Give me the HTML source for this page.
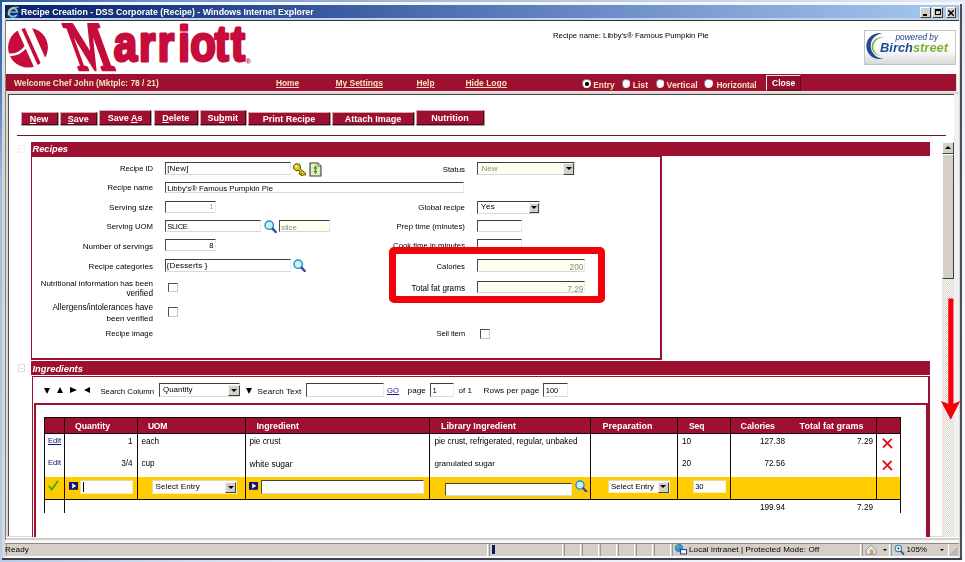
<!DOCTYPE html>
<html lang="en"><head><meta charset="utf-8"><title>Recipe Creation - DSS Corporate (Recipe) - Windows Internet Explorer</title>
<style>
html,body{margin:0;padding:0;}
body{width:965px;height:562px;overflow:hidden;position:relative;font-family:"Liberation Sans",sans-serif;
background:#f4f6fb;}
.t{position:absolute;white-space:nowrap;}
.L{position:absolute;left:0;top:0;width:965px;height:562px;will-change:transform;}
</style></head><body>
<div style="position:absolute;left:0px;top:0px;width:965px;height:3px;background:linear-gradient(to right,#2a5aa0 0,#6f93cc 160px,#aabde0 440px,#e4e9f5 100%);"></div>
<div style="position:absolute;left:0px;top:0px;width:3px;height:562px;background:linear-gradient(to bottom,#2a5aa0 0,#4a7ab8 85px,#a8b8dc 180px,#b8cce8 100%);"></div>
<div style="position:absolute;left:0px;top:559px;width:965px;height:3px;background:linear-gradient(to right,#b8cce8 0,#dfe6f4 300px,#f8f9fd 100%);"></div>
<div style="position:absolute;left:961px;top:0px;width:4px;height:562px;background:linear-gradient(to bottom,#e4e9f5 0,#f4f6fb 200px,#fafbfe 100%);"></div>
<div style="position:absolute;left:1.9px;top:2.4px;width:960.1px;height:557.2px;background:linear-gradient(to bottom,#eef0f6 0,#e2e5ea 30px,#d2d5d8 120px,#d6d8da 100%);"></div>
<div style="position:absolute;left:1.9px;top:2.4px;width:960.1px;height:2.6px;background:#f3f6fc;"></div>
<div style="position:absolute;left:960.4px;top:4px;width:1.5px;height:555.6px;background:#4a4e58;"></div>
<div style="position:absolute;left:1.9px;top:558px;width:960px;height:1.6px;background:#3c4048;"></div>
<div style="position:absolute;left:957.9px;top:5px;width:1.4px;height:553px;background:#a9a9a9;"></div>
<div style="position:absolute;left:5px;top:5px;width:953px;height:13.4px;background:linear-gradient(to right,#0a246a 0%,#0f2c74 8%,#2a4a92 25%,#5272b4 47%,#7a9cd2 72%,#a6caf0 100%);"></div>
<div style="position:absolute;left:5px;top:18.4px;width:953.6px;height:1.6px;background:#c6d2ea;"></div>
<div style="position:absolute;left:5px;top:20px;width:953.6px;height:1.4px;background:#30363e;"></div>
<div style="position:absolute;left:4.7px;top:20px;width:1.3px;height:538px;background:#85857d;"></div>
<div style="position:absolute;left:5.9px;top:21.4px;width:952.7px;height:53px;background:#fff;"></div>
<div style="position:absolute;left:5.9px;top:73.8px;width:950.6px;height:17px;background:#9e1030;"></div>
<div style="position:absolute;left:956.5px;top:73.8px;width:2.1px;height:17px;background:#fdf3f4;"></div>
<div style="position:absolute;left:5.9px;top:90.8px;width:952.7px;height:449.5px;background:#dbd8d3;"></div>
<div style="position:absolute;left:5.9px;top:90.8px;width:952.7px;height:1px;background:#f4e4e4;"></div>
<div style="position:absolute;left:7.8px;top:94.2px;width:946.3px;height:442.3px;background:#fff;border-top:1.3px solid #404040;border-left:1.1px solid #505050;box-sizing:border-box;"></div>
<div style="position:absolute;left:954.1px;top:94.2px;width:4.5px;height:446px;background:#f1f1f1;"></div>
<svg style="position:absolute;left:7px;top:5.5px" width="12" height="12" viewBox="0 0 12 12"><circle cx="6" cy="6.4" r="4.2" fill="none" stroke="#6fc0f0" stroke-width="2.2"/><rect x="6" y="6.6" width="5" height="2" fill="#16306f"/><rect x="3" y="5.4" width="7" height="1.4" fill="#6fc0f0"/><path d="M1 9 C 3 2, 9 0, 11.5 1.5" fill="none" stroke="#e8c84a" stroke-width="1.1"/></svg>
<div style="position:absolute;left:920.3px;top:7px;width:10.5px;height:10.5px;box-sizing:border-box;background:#d4d0c8;border-top:1px solid #fff;border-left:1px solid #fff;border-bottom:1px solid #404040;border-right:1px solid #404040;"><div style="position:absolute;left:2px;top:6px;width:4px;height:1.5px;background:#000"></div></div>
<div style="position:absolute;left:932px;top:7px;width:10.5px;height:10.5px;box-sizing:border-box;background:#d4d0c8;border-top:1px solid #fff;border-left:1px solid #fff;border-bottom:1px solid #404040;border-right:1px solid #404040;"><div style="position:absolute;left:1.5px;top:1px;width:6px;height:6px;box-sizing:border-box;border:1px solid #000;border-top:2px solid #000"></div></div>
<div style="position:absolute;left:945.5px;top:7px;width:10.5px;height:10.5px;box-sizing:border-box;background:#d4d0c8;border-top:1px solid #fff;border-left:1px solid #fff;border-bottom:1px solid #404040;border-right:1px solid #404040;"><svg style="position:absolute;left:1.5px;top:1.5px" width="6" height="6" viewBox="0 0 6 6"><path d="M0.3 0.3 L5.7 5.7 M5.7 0.3 L0.3 5.7" stroke="#000" stroke-width="1.5"/></svg></div>
<svg style="position:absolute;left:6px;top:21px" width="260" height="53" viewBox="6 21 260 53">
<g>
<circle cx="28" cy="47.6" r="19.9" fill="#c60c3a"/>
<g stroke="#fff" stroke-linecap="butt" fill="none">
<path d="M15.17 20 L39.8 75" stroke-width="4.2"/>
<path d="M24.87 20 L49.5 75" stroke-width="6.4"/>
<path d="M6 54.6 Q 18.5 56.5 26 46.5" stroke-width="2.6"/>
</g>
</g>
<text x="0" y="0" transform="translate(78.2 69.6) skewX(20) scale(0.58 1)" font-family="Liberation Serif, serif" font-weight="bold" font-size="70" fill="#c60c3a" stroke="#c60c3a" stroke-width="2.5" stroke-linejoin="round">M</text>
<text x="135.30 165.36 187.74 212.08 226.43 255.65 275.00" y="0" transform="translate(0 61.4) scale(0.84 1)" font-family="Liberation Sans, sans-serif" font-weight="bold" font-size="50" fill="#c60c3a" stroke="#c60c3a" stroke-width="3" stroke-linejoin="round">arriott</text>
<text x="245.4" y="63.8" font-family="Liberation Sans, sans-serif" font-size="7.5" font-weight="bold" fill="#c60c3a">®</text>
</svg>
<div style="position:absolute;left:864px;top:30px;width:92px;height:34.5px;box-sizing:border-box;border:1px solid #c4c4c4;background:linear-gradient(to bottom,#ffffff 0%,#fbfbfb 60%,#d8d8d8 100%);"></div>
<svg style="position:absolute;left:864px;top:30px" width="30" height="34" viewBox="0 0 30 34">
<path d="M18.5,3.5 A13,13 0 1,0 19.8,28.3 A12.4,12.4 0 1,1 18.5,3.5 Z" fill="#1f4a94"/>
<path d="M20.7,8.2 A9.2,9.2 0 1,0 16,25.7 A8.8,8.8 0 1,1 20.7,8.2 Z" fill="#7ab536"/>
</svg>
<div style="position:absolute;left:582.4px;top:79.3px;width:8.4px;height:8.4px;box-sizing:border-box;border-radius:50%;background:#fff;border:1px solid #808080;border-bottom-color:#e8e8e8;border-right-color:#e8e8e8;"><div style="position:absolute;left:2px;top:2px;width:3.4px;height:3.4px;border-radius:50%;background:#000"></div></div>
<div style="position:absolute;left:621.8px;top:79.3px;width:8.4px;height:8.4px;box-sizing:border-box;border-radius:50%;background:#fff;border:1px solid #808080;border-bottom-color:#e8e8e8;border-right-color:#e8e8e8;"></div>
<div style="position:absolute;left:655.5px;top:79.3px;width:8.4px;height:8.4px;box-sizing:border-box;border-radius:50%;background:#fff;border:1px solid #808080;border-bottom-color:#e8e8e8;border-right-color:#e8e8e8;"></div>
<div style="position:absolute;left:704.3px;top:79.3px;width:8.4px;height:8.4px;box-sizing:border-box;border-radius:50%;background:#fff;border:1px solid #808080;border-bottom-color:#e8e8e8;border-right-color:#e8e8e8;"></div>
<div style="position:absolute;left:766.4px;top:75px;width:35px;height:15.8px;box-sizing:border-box;background:#8e0e2b;border-top:1px solid #f4dfe3;border-left:1px solid #f4dfe3;border-bottom:1px solid #5a0818;border-right:1px solid #5a0818;"></div>
<div style="position:absolute;left:20.5px;top:112px;width:37.0px;height:13.299999999999997px;box-sizing:border-box;background:#9e1030;border-top:1px solid #d9a3ae;border-left:1px solid #d9a3ae;border-bottom:1px solid #4a0614;border-right:1px solid #4a0614;box-shadow:0.7px 0.7px 0 #777;"></div>
<div style="position:absolute;left:59.8px;top:112px;width:37.0px;height:13.299999999999997px;box-sizing:border-box;background:#9e1030;border-top:1px solid #d9a3ae;border-left:1px solid #d9a3ae;border-bottom:1px solid #4a0614;border-right:1px solid #4a0614;box-shadow:0.7px 0.7px 0 #777;"></div>
<div style="position:absolute;left:99px;top:110.2px;width:52.30000000000001px;height:15.099999999999994px;box-sizing:border-box;background:#9e1030;border-top:1px solid #d9a3ae;border-left:1px solid #d9a3ae;border-bottom:1px solid #4a0614;border-right:1px solid #4a0614;box-shadow:0.7px 0.7px 0 #777;"></div>
<div style="position:absolute;left:153.8px;top:110.2px;width:44.0px;height:15.099999999999994px;box-sizing:border-box;background:#9e1030;border-top:1px solid #d9a3ae;border-left:1px solid #d9a3ae;border-bottom:1px solid #4a0614;border-right:1px solid #4a0614;box-shadow:0.7px 0.7px 0 #777;"></div>
<div style="position:absolute;left:200px;top:110.2px;width:45.5px;height:15.099999999999994px;box-sizing:border-box;background:#9e1030;border-top:1px solid #d9a3ae;border-left:1px solid #d9a3ae;border-bottom:1px solid #4a0614;border-right:1px solid #4a0614;box-shadow:0.7px 0.7px 0 #777;"></div>
<div style="position:absolute;left:248px;top:112px;width:82px;height:13.299999999999997px;box-sizing:border-box;background:#9e1030;border-top:1px solid #d9a3ae;border-left:1px solid #d9a3ae;border-bottom:1px solid #4a0614;border-right:1px solid #4a0614;box-shadow:0.7px 0.7px 0 #777;"></div>
<div style="position:absolute;left:332px;top:112px;width:82px;height:13.299999999999997px;box-sizing:border-box;background:#9e1030;border-top:1px solid #d9a3ae;border-left:1px solid #d9a3ae;border-bottom:1px solid #4a0614;border-right:1px solid #4a0614;box-shadow:0.7px 0.7px 0 #777;"></div>
<div style="position:absolute;left:416px;top:110.2px;width:68px;height:15.099999999999994px;box-sizing:border-box;background:#9e1030;border-top:1px solid #d9a3ae;border-left:1px solid #d9a3ae;border-bottom:1px solid #4a0614;border-right:1px solid #4a0614;box-shadow:0.7px 0.7px 0 #777;"></div>
<div style="position:absolute;left:17px;top:135.0px;width:929px;height:1.1px;background:#6b1a2c;"></div>
<div style="position:absolute;left:942px;top:142px;width:12.3px;height:396px;background-color:#fff;background-image:linear-gradient(45deg,#d4d0c8 25%,transparent 25%,transparent 75%,#d4d0c8 75%),linear-gradient(45deg,#d4d0c8 25%,transparent 25%,transparent 75%,#d4d0c8 75%);background-size:2px 2px;background-position:0 0,1px 1px;"></div>
<div style="position:absolute;left:942px;top:142px;width:12.3px;height:12px;box-sizing:border-box;background:#d4d0c8;border-top:1px solid #fff;border-left:1px solid #fff;border-bottom:1px solid #404040;border-right:1px solid #404040;"><div style="position:absolute;left:2.4px;top:3px;width:0;height:0;border-left:3px solid transparent;border-right:3px solid transparent;border-bottom:3.5px solid #000;"></div></div>
<div style="position:absolute;left:942px;top:154px;width:12.3px;height:125px;box-sizing:border-box;background:#d4d0c8;border-top:1px solid #fff;border-left:1px solid #fff;border-bottom:1.3px solid #404040;border-right:1.3px solid #404040;"></div>
<div style="position:absolute;left:31px;top:141.8px;width:899px;height:14.2px;background:#9e1030;"></div>
<div style="position:absolute;left:31.4px;top:156px;width:630.6px;height:204px;box-sizing:border-box;border:2px solid #9e1030;border-top-width:1.5px;border-left-width:1.6px;background:#fff;"></div>
<div style="position:absolute;left:17.5px;top:144.5px;width:7.5px;height:8px;box-sizing:border-box;border:1px solid #f0f0f0;"><div style="position:absolute;left:1px;top:2.5px;width:3.5px;height:1px;background:#f0f0f0"></div></div>
<div style="position:absolute;left:17.5px;top:364px;width:7.5px;height:8px;box-sizing:border-box;border:1px solid #dcdcdc;"><div style="position:absolute;left:1px;top:2.5px;width:3.5px;height:1px;background:#dcdcdc"></div></div>
<div style="position:absolute;left:165px;top:162.4px;width:126px;height:12.199999999999989px;box-sizing:border-box;background:#fff;border-top:1.8px solid #3c3c3c;border-left:1.6px solid #4a4a4a;border-bottom:1px solid #d8d8d8;border-right:1px solid #ebebeb;"></div>
<div style="position:absolute;left:165px;top:181.6px;width:298.6px;height:11.800000000000011px;box-sizing:border-box;background:#fff;border-top:1.8px solid #3c3c3c;border-left:1.6px solid #4a4a4a;border-bottom:1px solid #d8d8d8;border-right:1px solid #ebebeb;"></div>
<div style="position:absolute;left:165px;top:200.6px;width:50.599999999999994px;height:12.200000000000017px;box-sizing:border-box;background:#fff;border-top:1.8px solid #3c3c3c;border-left:1.6px solid #4a4a4a;border-bottom:1px solid #d8d8d8;border-right:1px solid #ebebeb;"></div>
<div style="position:absolute;left:165px;top:219.8px;width:95.60000000000002px;height:12.199999999999989px;box-sizing:border-box;background:#fff;border-top:1.8px solid #3c3c3c;border-left:1.6px solid #4a4a4a;border-bottom:1px solid #d8d8d8;border-right:1px solid #ebebeb;"></div>
<div style="position:absolute;left:279px;top:219.8px;width:51px;height:12.199999999999989px;box-sizing:border-box;background:#fffff0;border-top:1.8px solid #3c3c3c;border-left:1.6px solid #4a4a4a;border-bottom:1px solid #d8d8d8;border-right:1px solid #ebebeb;"></div>
<div style="position:absolute;left:165px;top:239px;width:50.599999999999994px;height:12.400000000000006px;box-sizing:border-box;background:#fff;border-top:1.8px solid #3c3c3c;border-left:1.6px solid #4a4a4a;border-bottom:1px solid #d8d8d8;border-right:1px solid #ebebeb;"></div>
<div style="position:absolute;left:165px;top:259.2px;width:126px;height:12.400000000000034px;box-sizing:border-box;background:#fff;border-top:1.8px solid #3c3c3c;border-left:1.6px solid #4a4a4a;border-bottom:1px solid #d8d8d8;border-right:1px solid #ebebeb;"></div>
<div style="position:absolute;left:168px;top:282.8px;width:9.5px;height:9.5px;box-sizing:border-box;background:#fff;border-top:1.5px solid #505050;border-left:1.5px solid #505050;border-bottom:1px solid #c8c8c8;border-right:1px solid #c8c8c8;"></div>
<div style="position:absolute;left:168px;top:307px;width:9.5px;height:9.5px;box-sizing:border-box;background:#fff;border-top:1.5px solid #505050;border-left:1.5px solid #505050;border-bottom:1px solid #c8c8c8;border-right:1px solid #c8c8c8;"></div>
<svg style="position:absolute;left:264px;top:219.8px" width="13" height="13" viewBox="0 0 13 13"><circle cx="5.2" cy="5.2" r="4.2" fill="#c4f2f8" stroke="#2a8fc8" stroke-width="1.4"/><path d="M8.6 8.6 L11.7 12" stroke="#3a48a8" stroke-width="2.4" stroke-linecap="round"/></svg>
<svg style="position:absolute;left:293px;top:259px" width="13" height="13" viewBox="0 0 13 13"><circle cx="5.2" cy="5.2" r="4.2" fill="#c4f2f8" stroke="#2a8fc8" stroke-width="1.4"/><path d="M8.6 8.6 L11.7 12" stroke="#3a48a8" stroke-width="2.4" stroke-linecap="round"/></svg>
<svg style="position:absolute;left:293.4px;top:162.6px" width="14" height="13" viewBox="0 0 14 13"><path d="M5.4 5.6 L11.6 11 M8.6 8.6 L7.2 10.4 M10.4 10 L9 11.8" stroke="#6a5c06" stroke-width="3" stroke-linecap="round"/><circle cx="4" cy="4.2" r="3.4" fill="#e0cc1c" stroke="#6a5c06" stroke-width="1.1"/><path d="M5.6 5.8 L11.4 10.8 M8.6 8.6 L7.4 10.2 M10.4 10 L9.2 11.4" stroke="#e0cc1c" stroke-width="1.5" stroke-linecap="round"/><circle cx="3.2" cy="3.4" r="1" fill="#fff8c0"/></svg>
<svg style="position:absolute;left:309px;top:161.5px" width="13" height="15" viewBox="0 0 13 15"><path d="M1 1 H9 L12 4 V14 H1 Z" fill="#dff0c0" stroke="#3a3a3a" stroke-width="1.1"/><path d="M9 1 V4 H12" fill="#fff" stroke="#3a3a3a" stroke-width="0.8"/><path d="M6.5 3.5 V7 M5 5.5 L6.5 7.2 L8 5.5 M6.5 12 V8.6 M5 10.2 L6.5 8.4 L8 10.2" stroke="#3c9a1c" stroke-width="1.2" fill="none"/></svg>
<div style="position:absolute;left:477px;top:161.6px;width:98px;height:13.800000000000011px;box-sizing:border-box;background:#fffff0;border-top:1.8px solid #3c3c3c;border-left:1.6px solid #4a4a4a;border-bottom:1px solid #d8d8d8;border-right:1px solid #ebebeb;"></div>
<div style="position:absolute;left:562.9px;top:163.2px;width:11.5px;height:11.600000000000012px;box-sizing:border-box;background:#d4d0c8;border-top:1px solid #f4f4f4;border-left:1px solid #f4f4f4;border-bottom:1px solid #404040;border-right:1px solid #404040;"><div style="position:absolute;left:1.8px;top:3.2px;width:0;height:0;border-left:3px solid transparent;border-right:3px solid transparent;border-top:3.4px solid #000;"></div></div>
<div style="position:absolute;left:477px;top:201px;width:63px;height:12.800000000000011px;box-sizing:border-box;background:#fff;border-top:1.8px solid #3c3c3c;border-left:1.6px solid #4a4a4a;border-bottom:1px solid #d8d8d8;border-right:1px solid #ebebeb;"></div>
<div style="position:absolute;left:528.9px;top:202.6px;width:10.5px;height:10.600000000000012px;box-sizing:border-box;background:#d4d0c8;border-top:1px solid #f4f4f4;border-left:1px solid #f4f4f4;border-bottom:1px solid #404040;border-right:1px solid #404040;"><div style="position:absolute;left:1.2px;top:2.7px;width:0;height:0;border-left:3px solid transparent;border-right:3px solid transparent;border-top:3.4px solid #000;"></div></div>
<div style="position:absolute;left:477px;top:219.6px;width:45px;height:12.800000000000011px;box-sizing:border-box;background:#fff;border-top:1.8px solid #3c3c3c;border-left:1.6px solid #4a4a4a;border-bottom:1px solid #d8d8d8;border-right:1px solid #ebebeb;"></div>
<div style="position:absolute;left:477px;top:239px;width:45px;height:12.800000000000011px;box-sizing:border-box;background:#fff;border-top:1.8px solid #3c3c3c;border-left:1.6px solid #4a4a4a;border-bottom:1px solid #d8d8d8;border-right:1px solid #ebebeb;"></div>
<div style="position:absolute;left:477px;top:259px;width:108px;height:12.800000000000011px;box-sizing:border-box;background:#fffff0;border-top:1.8px solid #3c3c3c;border-left:1.6px solid #4a4a4a;border-bottom:1px solid #d8d8d8;border-right:1px solid #ebebeb;"></div>
<div style="position:absolute;left:477px;top:281px;width:108px;height:12.399999999999977px;box-sizing:border-box;background:#fffff0;border-top:1.8px solid #3c3c3c;border-left:1.6px solid #4a4a4a;border-bottom:1px solid #d8d8d8;border-right:1px solid #ebebeb;"></div>
<div style="position:absolute;left:480px;top:328.6px;width:10px;height:10px;box-sizing:border-box;background:#fff;border-top:1.5px solid #505050;border-left:1.5px solid #505050;border-bottom:1px solid #c8c8c8;border-right:1px solid #c8c8c8;"></div>
<div style="position:absolute;left:31px;top:361.2px;width:899px;height:13.4px;background:#9e1030;"></div>
<div style="position:absolute;left:31.6px;top:375.8px;width:898px;height:164px;box-sizing:border-box;border:1.3px solid #9e1030;border-right-width:2.2px;border-bottom:none;background:#fff;"></div>
<div style="position:absolute;left:34.2px;top:403px;width:893.4px;height:136px;box-sizing:border-box;border:2px solid #9e1030;border-right-width:2.7px;border-bottom:none;background:#fff;"></div>
<div style="position:absolute;left:43.8px;top:387.6px;width:0px;height:0px;border-left:3.5px solid transparent;border-right:3.5px solid transparent;border-top:6.4px solid #000;"></div>
<div style="position:absolute;left:57px;top:387.4px;width:0px;height:0px;border-left:3.5px solid transparent;border-right:3.5px solid transparent;border-bottom:6.4px solid #000;"></div>
<div style="position:absolute;left:70.2px;top:387.4px;width:0px;height:0px;border-top:3.3px solid transparent;border-bottom:3.3px solid transparent;border-left:7.6px solid #000;"></div>
<div style="position:absolute;left:83.8px;top:387.4px;width:0px;height:0px;border-top:3.3px solid transparent;border-bottom:3.3px solid transparent;border-right:6.8px solid #000;"></div>
<div style="position:absolute;left:246.2px;top:387.6px;width:0px;height:0px;border-left:3.5px solid transparent;border-right:3.5px solid transparent;border-top:6.4px solid #000;"></div>
<div style="position:absolute;left:159px;top:383px;width:81.4px;height:13.600000000000023px;box-sizing:border-box;background:#fff;border-top:1.8px solid #3c3c3c;border-left:1.6px solid #4a4a4a;border-bottom:1px solid #d8d8d8;border-right:1px solid #ebebeb;"></div>
<div style="position:absolute;left:228.3px;top:384.6px;width:11.5px;height:11.400000000000023px;box-sizing:border-box;background:#d4d0c8;border-top:1px solid #f4f4f4;border-left:1px solid #f4f4f4;border-bottom:1px solid #404040;border-right:1px solid #404040;"><div style="position:absolute;left:1.8px;top:3.1px;width:0;height:0;border-left:3px solid transparent;border-right:3px solid transparent;border-top:3.4px solid #000;"></div></div>
<div style="position:absolute;left:306px;top:383.4px;width:77.60000000000002px;height:13.600000000000023px;box-sizing:border-box;background:#fff;border-top:1.8px solid #3c3c3c;border-left:1.6px solid #4a4a4a;border-bottom:1px solid #d8d8d8;border-right:1px solid #ebebeb;"></div>
<div style="position:absolute;left:429.6px;top:383.4px;width:24.799999999999955px;height:13.600000000000023px;box-sizing:border-box;background:#fff;border-top:1.8px solid #3c3c3c;border-left:1.6px solid #4a4a4a;border-bottom:1px solid #d8d8d8;border-right:1px solid #ebebeb;"></div>
<div style="position:absolute;left:543px;top:383.4px;width:24.600000000000023px;height:13.600000000000023px;box-sizing:border-box;background:#fff;border-top:1.8px solid #3c3c3c;border-left:1.6px solid #4a4a4a;border-bottom:1px solid #d8d8d8;border-right:1px solid #ebebeb;"></div>
<div style="position:absolute;left:44.4px;top:417.4px;width:556px;height:16px;background:#9e1030;"></div>
<div style="position:absolute;left:44.4px;top:417.4px;width:856.4px;height:16px;background:#9e1030;"></div>
<div style="position:absolute;left:44.4px;top:477px;width:856.4px;height:22px;background:#ffcc00;"></div>
<div style="position:absolute;left:44px;top:417px;width:857px;height:1px;background:#1a0508;"></div>
<div style="position:absolute;left:44px;top:433px;width:857px;height:1px;background:#1a0508;"></div>
<div style="position:absolute;left:44px;top:499px;width:857px;height:1px;background:#1a0508;"></div>
<div style="position:absolute;left:44px;top:417px;width:1px;height:96px;background:#1a0508;"></div>
<div style="position:absolute;left:64px;top:417px;width:1px;height:96px;background:#1a0508;"></div>
<div style="position:absolute;left:137px;top:417px;width:1px;height:82.4px;background:#1a0508;"></div>
<div style="position:absolute;left:245px;top:417px;width:1px;height:82.4px;background:#1a0508;"></div>
<div style="position:absolute;left:429px;top:417px;width:1px;height:82.4px;background:#1a0508;"></div>
<div style="position:absolute;left:590px;top:417px;width:1px;height:82.4px;background:#1a0508;"></div>
<div style="position:absolute;left:677px;top:417px;width:1px;height:82.4px;background:#1a0508;"></div>
<div style="position:absolute;left:730px;top:417px;width:1px;height:82.4px;background:#1a0508;"></div>
<div style="position:absolute;left:876px;top:417px;width:1px;height:82.4px;background:#1a0508;"></div>
<div style="position:absolute;left:900px;top:417px;width:1px;height:96px;background:#1a0508;"></div>
<svg style="position:absolute;left:881.6px;top:437.6px" width="11" height="11" viewBox="0 0 11 11"><path d="M0.8 0.6 L10 10 M9.6 1 L1 9.6" stroke="#e01020" stroke-width="1.8" fill="none"/></svg>
<svg style="position:absolute;left:881.6px;top:459.6px" width="11" height="11" viewBox="0 0 11 11"><path d="M0.8 0.6 L10 10 M9.6 1 L1 9.6" stroke="#e01020" stroke-width="1.8" fill="none"/></svg>
<svg style="position:absolute;left:47.6px;top:479.6px" width="11" height="11" viewBox="0 0 11 11"><path d="M0.8 5.8 L3.8 9.6 L10 0.8" stroke="#3aa81a" stroke-width="1.7" fill="none"/></svg>
<svg style="position:absolute;left:69px;top:482.3px" width="9.4" height="7.8" viewBox="0 0 9.4 7.8"><rect width="9.4" height="7.8" fill="#141478"/><path d="M3.2 1.2 L7.2 3.9 L3.2 6.6 Z" fill="#fff"/></svg>
<svg style="position:absolute;left:249px;top:482.3px" width="9.4" height="7.8" viewBox="0 0 9.4 7.8"><rect width="9.4" height="7.8" fill="#141478"/><path d="M3.2 1.2 L7.2 3.9 L3.2 6.6 Z" fill="#fff"/></svg>
<div style="position:absolute;left:80px;top:480px;width:53px;height:13.800000000000011px;box-sizing:border-box;background:#fff;border:1.2px solid #fff0b4;border-top-color:#e8d9a0;border-left-color:#e8d9a0;"></div>
<div style="position:absolute;left:82.6px;top:482.4px;width:1px;height:9.4px;background:#000;"></div>
<div style="position:absolute;left:152px;top:480px;width:85px;height:13.600000000000023px;box-sizing:border-box;background:#fff;border:1.2px solid #fff0b4;border-top-color:#e8d9a0;border-left-color:#e8d9a0;"></div>
<div style="position:absolute;left:224.9px;top:481.6px;width:11.5px;height:11.400000000000023px;box-sizing:border-box;background:#d4d0c8;border-top:1px solid #f4f4f4;border-left:1px solid #f4f4f4;border-bottom:1px solid #404040;border-right:1px solid #404040;"><div style="position:absolute;left:1.8px;top:3.1px;width:0;height:0;border-left:3px solid transparent;border-right:3px solid transparent;border-top:3.4px solid #000;"></div></div>
<div style="position:absolute;left:261px;top:480px;width:163.39999999999998px;height:13.800000000000011px;box-sizing:border-box;background:#fff;border-top:1.8px solid #3c3c3c;border-left:1.6px solid #4a4a4a;border-bottom:1px solid #d8d8d8;border-right:1px solid #ebebeb;"></div>
<div style="position:absolute;left:445px;top:483px;width:127px;height:12.800000000000011px;box-sizing:border-box;background:#fff;border-top:1.8px solid #3c3c3c;border-left:1.6px solid #4a4a4a;border-bottom:1px solid #d8d8d8;border-right:1px solid #ebebeb;"></div>
<svg style="position:absolute;left:575.4px;top:479.8px" width="12.6" height="12.6" viewBox="0 0 13 13"><circle cx="5.2" cy="5.2" r="4.2" fill="#c4f2f8" stroke="#2a8fc8" stroke-width="1.4"/><path d="M8.6 8.6 L11.7 12" stroke="#3a48a8" stroke-width="2.4" stroke-linecap="round"/></svg>
<div style="position:absolute;left:608px;top:480px;width:61.60000000000002px;height:13.199999999999989px;box-sizing:border-box;background:#fff;border:1.2px solid #fff0b4;border-top-color:#e8d9a0;border-left-color:#e8d9a0;"></div>
<div style="position:absolute;left:657.5px;top:481.6px;width:11.5px;height:10.99999999999999px;box-sizing:border-box;background:#d4d0c8;border-top:1px solid #f4f4f4;border-left:1px solid #f4f4f4;border-bottom:1px solid #404040;border-right:1px solid #404040;"><div style="position:absolute;left:1.8px;top:2.9px;width:0;height:0;border-left:3px solid transparent;border-right:3px solid transparent;border-top:3.4px solid #000;"></div></div>
<div style="position:absolute;left:693px;top:480.4px;width:32.60000000000002px;height:12.800000000000011px;box-sizing:border-box;background:#fff;border:1.2px solid #fff0b4;border-top-color:#e8d9a0;border-left-color:#e8d9a0;"></div>
<div class="L">
<div class="t" style="top:5.80px;font-size:8.783px;line-height:12px;color:#fff;font-weight:bold;left:21.00px;">Recipe Creation - DSS Corporate (Recipe) - Windows Internet Explorer</div>
<div class="t" style="top:30.30px;font-size:7.784px;line-height:12px;color:#000;left:553.00px;">Recipe name: Libby's® Famous Pumpkin Pie</div>
<div class="t" style="top:32.00px;font-size:8.242px;line-height:12px;color:#1f3f80;font-style:italic;left:895.50px;">powered by</div>
<div class="t" style="top:42.20px;font-size:12.881px;line-height:12px;color:#1f4a94;font-weight:bold;font-style:italic;left:880.00px;">Birch<span style="color:#7ab536">street</span></div>
<div class="t" style="top:77.20px;font-size:8.378px;line-height:12px;color:#f6e2bd;font-weight:bold;left:14.00px;">Welcome Chef John (Mktplc: 78 / 21)</div>
<div class="t" style="top:77.20px;font-size:8.342px;line-height:12px;color:#f6e2bd;letter-spacing:-0.043px;font-weight:bold;text-decoration:underline;left:276.00px;">Home</div>
<div class="t" style="top:77.20px;font-size:8.487px;line-height:12px;color:#f6e2bd;font-weight:bold;text-decoration:underline;left:335.40px;">My Settings</div>
<div class="t" style="top:77.20px;font-size:8.404px;line-height:12px;color:#f6e2bd;font-weight:bold;text-decoration:underline;left:416.40px;">Help</div>
<div class="t" style="top:77.20px;font-size:8.515px;line-height:12px;color:#f6e2bd;font-weight:bold;text-decoration:underline;left:465.40px;">Hide Logo</div>
<div class="t" style="top:78.60px;font-size:8.342px;line-height:12px;color:#f6e2bd;letter-spacing:-0.002px;font-weight:bold;left:593.30px;">Entry</div>
<div class="t" style="top:78.60px;font-size:8.611px;line-height:12px;color:#f6e2bd;font-weight:bold;left:632.70px;">List</div>
<div class="t" style="top:78.60px;font-size:8.747px;line-height:12px;color:#f6e2bd;font-weight:bold;left:666.60px;">Vertical</div>
<div class="t" style="top:78.60px;font-size:8.342px;line-height:12px;color:#f6e2bd;letter-spacing:-0.066px;font-weight:bold;left:716.40px;">Horizontal</div>
<div class="t" style="top:76.60px;font-size:8.591px;line-height:12px;color:#fff;font-weight:bold;left:772.00px;">Close</div>
<div class="t" style="top:112.80px;font-size:9.000px;line-height:12px;color:#fff;font-weight:bold;left:-111.00px;width:300px;text-align:center;"><span style="text-decoration:underline">N</span>ew</div>
<div class="t" style="top:112.80px;font-size:9.000px;line-height:12px;color:#fff;font-weight:bold;left:-71.70px;width:300px;text-align:center;"><span style="text-decoration:underline">S</span>ave</div>
<div class="t" style="top:111.60px;font-size:9.000px;line-height:12px;color:#fff;font-weight:bold;left:-24.85px;width:300px;text-align:center;">Save <span style="text-decoration:underline">A</span>s</div>
<div class="t" style="top:111.60px;font-size:9.000px;line-height:12px;color:#fff;font-weight:bold;left:25.80px;width:300px;text-align:center;"><span style="text-decoration:underline">D</span>elete</div>
<div class="t" style="top:111.60px;font-size:9.000px;line-height:12px;color:#fff;font-weight:bold;left:72.75px;width:300px;text-align:center;">Su<span style="text-decoration:underline">b</span>mit</div>
<div class="t" style="top:112.80px;font-size:9.000px;line-height:12px;color:#fff;font-weight:bold;left:139.00px;width:300px;text-align:center;">Print Recipe</div>
<div class="t" style="top:112.80px;font-size:9.000px;line-height:12px;color:#fff;font-weight:bold;left:223.00px;width:300px;text-align:center;">Attach Image</div>
<div class="t" style="top:111.60px;font-size:9.000px;line-height:12px;color:#fff;font-weight:bold;left:300.00px;width:300px;text-align:center;">Nutrition</div>
<div class="t" style="top:143.30px;font-size:9.312px;line-height:12px;color:#fff;letter-spacing:-0.028px;font-weight:bold;font-style:italic;left:32.50px;">Recipes</div>
<div class="t" style="top:163.20px;font-size:7.663px;line-height:12px;color:#000;letter-spacing:-0.069px;right:812.00px;">Recipe ID</div>
<div class="t" style="top:182.20px;font-size:7.747px;line-height:12px;color:#000;right:812.00px;">Recipe name</div>
<div class="t" style="top:201.60px;font-size:8.087px;line-height:12px;color:#000;right:812.00px;">Serving size</div>
<div class="t" style="top:220.60px;font-size:7.740px;line-height:12px;color:#000;right:812.00px;">Serving UOM</div>
<div class="t" style="top:240.70px;font-size:8.128px;line-height:12px;color:#000;right:812.00px;">Number of servings</div>
<div class="t" style="top:260.80px;font-size:8.054px;line-height:12px;color:#000;right:812.00px;">Recipe categories</div>
<div class="t" style="top:277.80px;font-size:7.969px;line-height:12px;color:#000;right:812.00px;">Nutritional information has been</div>
<div class="t" style="top:288.00px;font-size:8.255px;line-height:12px;color:#000;letter-spacing:0.002px;right:812.00px;">verified</div>
<div class="t" style="top:302.00px;font-size:8.197px;line-height:12px;color:#000;right:812.00px;">Allergens/intolerances have</div>
<div class="t" style="top:312.80px;font-size:8.112px;line-height:12px;color:#000;right:812.00px;">been verified</div>
<div class="t" style="top:327.60px;font-size:7.761px;line-height:12px;color:#000;right:812.00px;">Recipe image</div>
<div class="t" style="top:163.90px;font-size:7.909px;line-height:12px;color:#000;right:500.00px;">Status</div>
<div class="t" style="top:201.90px;font-size:7.934px;line-height:12px;color:#000;right:500.00px;">Global recipe</div>
<div class="t" style="top:221.10px;font-size:7.872px;line-height:12px;color:#000;right:500.00px;">Prep time (minutes)</div>
<div class="t" style="top:240.30px;font-size:7.719px;line-height:12px;color:#000;right:500.00px;">Cook time in minutes</div>
<div class="t" style="top:261.10px;font-size:7.776px;line-height:12px;color:#000;right:500.00px;">Calories</div>
<div class="t" style="top:282.70px;font-size:8.152px;line-height:12px;color:#000;right:500.00px;">Total fat grams</div>
<div class="t" style="top:328.10px;font-size:7.663px;line-height:12px;color:#000;letter-spacing:-0.095px;right:500.00px;">Sell item</div>
<div class="t" style="top:163.40px;font-size:8.099px;line-height:12px;color:#000;letter-spacing:0.159px;left:167.20px;">[New]</div>
<div class="t" style="top:182.60px;font-size:7.794px;line-height:12px;color:#000;left:167.20px;">Libby's® Famous Pumpkin Pie</div>
<div class="t" style="top:201.40px;font-size:7.750px;line-height:12px;color:#a8a8a8;right:751.40px;">1</div>
<div class="t" style="top:221.20px;font-size:7.518px;line-height:12px;color:#000;letter-spacing:-0.247px;left:167.20px;">SLICE</div>
<div class="t" style="top:221.80px;font-size:7.892px;line-height:12px;color:#8a8a8a;left:281.20px;">slice</div>
<div class="t" style="top:240.20px;font-size:7.750px;line-height:12px;color:#000;right:751.40px;">8</div>
<div class="t" style="top:260.00px;font-size:8.099px;line-height:12px;color:#000;letter-spacing:0.126px;left:166.60px;">{Desserts }</div>
<div class="t" style="top:162.80px;font-size:7.992px;line-height:12px;color:#8a8a8a;left:481.60px;">New</div>
<div class="t" style="top:201.40px;font-size:8.099px;line-height:12px;color:#000;letter-spacing:0.458px;left:480.80px;">Yes</div>
<div class="t" style="top:261.00px;font-size:8.300px;line-height:12px;color:#8a8a8a;right:381.60px;">200</div>
<div class="t" style="top:282.50px;font-size:8.300px;line-height:12px;color:#8a8a8a;right:381.60px;">7.29</div>
<div class="t" style="top:362.60px;font-size:9.374px;line-height:12px;color:#fff;font-weight:bold;font-style:italic;left:32.50px;">Ingredients</div>
<div class="t" style="top:386.00px;font-size:7.805px;line-height:12px;color:#000;left:100.40px;">Search Column</div>
<div class="t" style="top:384.00px;font-size:7.945px;line-height:12px;color:#000;left:163.00px;">Quantity</div>
<div class="t" style="top:386.00px;font-size:8.099px;line-height:12px;color:#000;letter-spacing:0.124px;left:257.60px;">Search Text</div>
<div class="t" style="top:384.60px;font-size:7.710px;line-height:12px;color:#1a1a8a;text-decoration:underline;left:387.00px;">GO</div>
<div class="t" style="top:385.00px;font-size:8.099px;line-height:12px;color:#000;letter-spacing:0.093px;left:407.60px;">page</div>
<div class="t" style="top:385.00px;font-size:7.750px;line-height:12px;color:#000;left:432.60px;">1</div>
<div class="t" style="top:384.60px;font-size:8.027px;line-height:12px;color:#000;left:458.60px;">of 1</div>
<div class="t" style="top:384.60px;font-size:8.099px;line-height:12px;color:#000;letter-spacing:0.116px;left:483.60px;">Rows per page</div>
<div class="t" style="top:385.00px;font-size:7.518px;line-height:12px;color:#000;letter-spacing:-0.050px;left:545.80px;">100</div>
<div class="t" style="top:419.60px;font-size:8.630px;line-height:12px;color:#fff;font-weight:bold;left:75.00px;">Quantity</div>
<div class="t" style="top:419.60px;font-size:8.536px;line-height:12px;color:#fff;letter-spacing:-0.305px;font-weight:bold;left:148.00px;">UOM</div>
<div class="t" style="top:419.60px;font-size:8.814px;line-height:12px;color:#fff;font-weight:bold;left:256.40px;">Ingredient</div>
<div class="t" style="top:419.60px;font-size:8.824px;line-height:12px;color:#fff;font-weight:bold;left:441.00px;">Library Ingredient</div>
<div class="t" style="top:419.60px;font-size:8.964px;line-height:12px;color:#fff;font-weight:bold;left:602.60px;">Preparation</div>
<div class="t" style="top:419.60px;font-size:8.536px;line-height:12px;color:#fff;letter-spacing:-0.085px;font-weight:bold;left:689.00px;">Seq</div>
<div class="t" style="top:419.60px;font-size:8.719px;line-height:12px;color:#fff;font-weight:bold;left:740.60px;">Calories</div>
<div class="t" style="top:419.60px;font-size:9.025px;line-height:12px;color:#fff;font-weight:bold;left:799.60px;">Total fat grams</div>
<div class="t" style="top:435.20px;font-size:7.542px;line-height:12px;color:#0a0a78;text-decoration:underline;left:48.00px;">Edit</div>
<div class="t" style="top:457.20px;font-size:7.542px;line-height:12px;color:#0a0a78;left:48.00px;">Edit</div>
<div class="t" style="top:436.00px;font-size:8.200px;line-height:12px;color:#000;right:832.40px;">1</div>
<div class="t" style="top:457.80px;font-size:8.200px;line-height:12px;color:#000;right:832.40px;">3/4</div>
<div class="t" style="top:436.00px;font-size:8.200px;line-height:12px;color:#000;left:141.40px;">each</div>
<div class="t" style="top:457.80px;font-size:8.200px;line-height:12px;color:#000;left:141.40px;">cup</div>
<div class="t" style="top:435.80px;font-size:8.265px;line-height:12px;color:#000;left:249.40px;">pie crust</div>
<div class="t" style="top:457.80px;font-size:8.459px;line-height:12px;color:#000;left:249.40px;">white sugar</div>
<div class="t" style="top:435.80px;font-size:8.216px;line-height:12px;color:#000;left:434.40px;">pie crust, refrigerated, regular, unbaked</div>
<div class="t" style="top:457.80px;font-size:8.086px;line-height:12px;color:#000;left:434.40px;">granulated sugar</div>
<div class="t" style="top:436.00px;font-size:8.200px;line-height:12px;color:#000;left:682.00px;">10</div>
<div class="t" style="top:457.80px;font-size:8.200px;line-height:12px;color:#000;left:682.00px;">20</div>
<div class="t" style="top:436.00px;font-size:8.200px;line-height:12px;color:#000;right:180.00px;">127.38</div>
<div class="t" style="top:457.80px;font-size:8.200px;line-height:12px;color:#000;right:180.00px;">72.56</div>
<div class="t" style="top:436.00px;font-size:8.200px;line-height:12px;color:#000;right:92.00px;">7.29</div>
<div class="t" style="top:502.00px;font-size:8.200px;line-height:12px;color:#000;right:180.00px;">199.94</div>
<div class="t" style="top:502.00px;font-size:8.200px;line-height:12px;color:#000;right:92.00px;">7.29</div>
<div class="t" style="top:481.00px;font-size:8.099px;line-height:12px;color:#000;letter-spacing:0.062px;left:155.60px;">Select Entry</div>
<div class="t" style="top:480.80px;font-size:7.976px;line-height:12px;color:#000;left:611.00px;">Select Entry</div>
<div class="t" style="top:481.00px;font-size:7.518px;line-height:12px;color:#000;letter-spacing:-0.183px;left:695.20px;">30</div>
</div>
<div style="position:absolute;left:388.7px;top:247px;width:216.2px;height:56px;box-sizing:border-box;border:7.2px solid #f4000a;border-radius:5px;"></div>
<svg style="position:absolute;left:938px;top:296px" width="26" height="126" viewBox="938 296 26 126"><path d="M948.3 298.6 H953.4 V403.8 L960.2 401 L950.8 419.8 L940.8 401 L948.3 403.8 Z" fill="#f4000a"/></svg>
<div style="position:absolute;left:5.9px;top:536.6px;width:952.7px;height:1.4px;background:#fff;"></div>
<div style="position:absolute;left:5.9px;top:538px;width:952.7px;height:2.3px;background:#d4d0c8;"></div>
<div style="position:absolute;left:5px;top:540.3px;width:953.6px;height:2.7px;background:#f6f6f6;"></div>
<div style="position:absolute;left:5px;top:543px;width:953.6px;height:13px;background:#d4d0c8;border-top:1px solid #8a8a8a;box-sizing:border-box;"></div>
<div style="position:absolute;left:5px;top:556px;width:953.6px;height:2px;background:#f8f8f8;"></div>
<div style="position:absolute;left:6px;top:544px;width:482px;height:12px;box-sizing:border-box;border-left:1px solid #9a9a9a;border-right:1px solid #fff;"></div>
<div style="position:absolute;left:489.4px;top:544px;width:73.60000000000002px;height:12px;box-sizing:border-box;border-left:1px solid #9a9a9a;border-right:1px solid #fff;"></div>
<div style="position:absolute;left:563.6px;top:544px;width:17.399999999999977px;height:12px;box-sizing:border-box;border-left:1px solid #9a9a9a;border-right:1px solid #fff;"></div>
<div style="position:absolute;left:581.8px;top:544px;width:17.40000000000009px;height:12px;box-sizing:border-box;border-left:1px solid #9a9a9a;border-right:1px solid #fff;"></div>
<div style="position:absolute;left:599.9px;top:544px;width:17.300000000000068px;height:12px;box-sizing:border-box;border-left:1px solid #9a9a9a;border-right:1px solid #fff;"></div>
<div style="position:absolute;left:618px;top:544px;width:17.299999999999955px;height:12px;box-sizing:border-box;border-left:1px solid #9a9a9a;border-right:1px solid #fff;"></div>
<div style="position:absolute;left:636px;top:544px;width:17.299999999999955px;height:12px;box-sizing:border-box;border-left:1px solid #9a9a9a;border-right:1px solid #fff;"></div>
<div style="position:absolute;left:654px;top:544px;width:17.299999999999955px;height:12px;box-sizing:border-box;border-left:1px solid #9a9a9a;border-right:1px solid #fff;"></div>
<div style="position:absolute;left:672px;top:544px;width:189.39999999999998px;height:12px;box-sizing:border-box;border-left:1px solid #9a9a9a;border-right:1px solid #fff;"></div>
<div style="position:absolute;left:862.4px;top:544px;width:27.200000000000045px;height:12px;box-sizing:border-box;border-left:1px solid #9a9a9a;border-right:1px solid #fff;"></div>
<div style="position:absolute;left:890.6px;top:544px;width:58.39999999999998px;height:12px;box-sizing:border-box;border-left:1px solid #9a9a9a;border-right:1px solid #fff;"></div>
<div style="position:absolute;left:491.8px;top:544.6px;width:3.4px;height:9.4px;background:#0a1a5c;"></div>
<svg style="position:absolute;left:674px;top:543.4px" width="13" height="12" viewBox="0 0 13 12"><circle cx="5" cy="5" r="4.2" fill="#3a8ad8"/><path d="M2.4 3 C4 1.6, 6 2.4, 5 4.4 C4 6, 2.4 5.6, 2.4 3 Z M5.6 6 L7.4 5.4 L7.6 8 Z" fill="#5ac24a"/><rect x="6.6" y="6.6" width="6" height="4.4" fill="#f4f4f4" stroke="#1a2a7a" stroke-width="0.9"/></svg>
<svg style="position:absolute;left:865px;top:544px" width="12" height="11" viewBox="0 0 12 11"><path d="M1 6 L6 1 L11 6 V10.4 H1 Z" fill="#e4e4ee" stroke="#8a8aa0" stroke-width="0.9"/><rect x="5" y="5.6" width="3.4" height="4.8" fill="#c8a85a"/></svg>
<div style="position:absolute;left:882.6px;top:549.2px;width:0px;height:0px;border-left:2.2px solid transparent;border-right:2.2px solid transparent;border-top:2.6px solid #000;"></div>
<svg style="position:absolute;left:894px;top:543.6px" width="11" height="12" viewBox="0 0 11 12"><circle cx="4.4" cy="4.4" r="3.2" fill="#dff0ff" stroke="#3a7ac4" stroke-width="1.1"/><path d="M6.8 7 L10 10.6" stroke="#2a4a9a" stroke-width="1.8"/><path d="M3 4.4 H5.8 M4.4 3 V5.8" stroke="#2a9a2a" stroke-width="0.9"/></svg>
<div style="position:absolute;left:939.6px;top:549.2px;width:0px;height:0px;border-left:2.2px solid transparent;border-right:2.2px solid transparent;border-top:2.6px solid #000;"></div>
<svg style="position:absolute;left:949px;top:546.6px" width="9" height="9" viewBox="0 0 9 9"><path d="M8.6 1 L1 8.6 M8.6 4 L4 8.6 M8.6 7 L7 8.6" stroke="#8a8a8a" stroke-width="1"/></svg>
<div class="L">
<div class="t" style="top:544.00px;font-size:8.099px;line-height:12px;color:#000;letter-spacing:0.117px;left:5.00px;">Ready</div>
<div class="t" style="top:544.00px;font-size:8.099px;line-height:12px;color:#000;letter-spacing:0.085px;left:689.00px;">Local intranet | Protected Mode: Off</div>
<div class="t" style="top:544.00px;font-size:8.013px;line-height:12px;color:#000;left:906.50px;">105%</div>
</div>
</body></html>
